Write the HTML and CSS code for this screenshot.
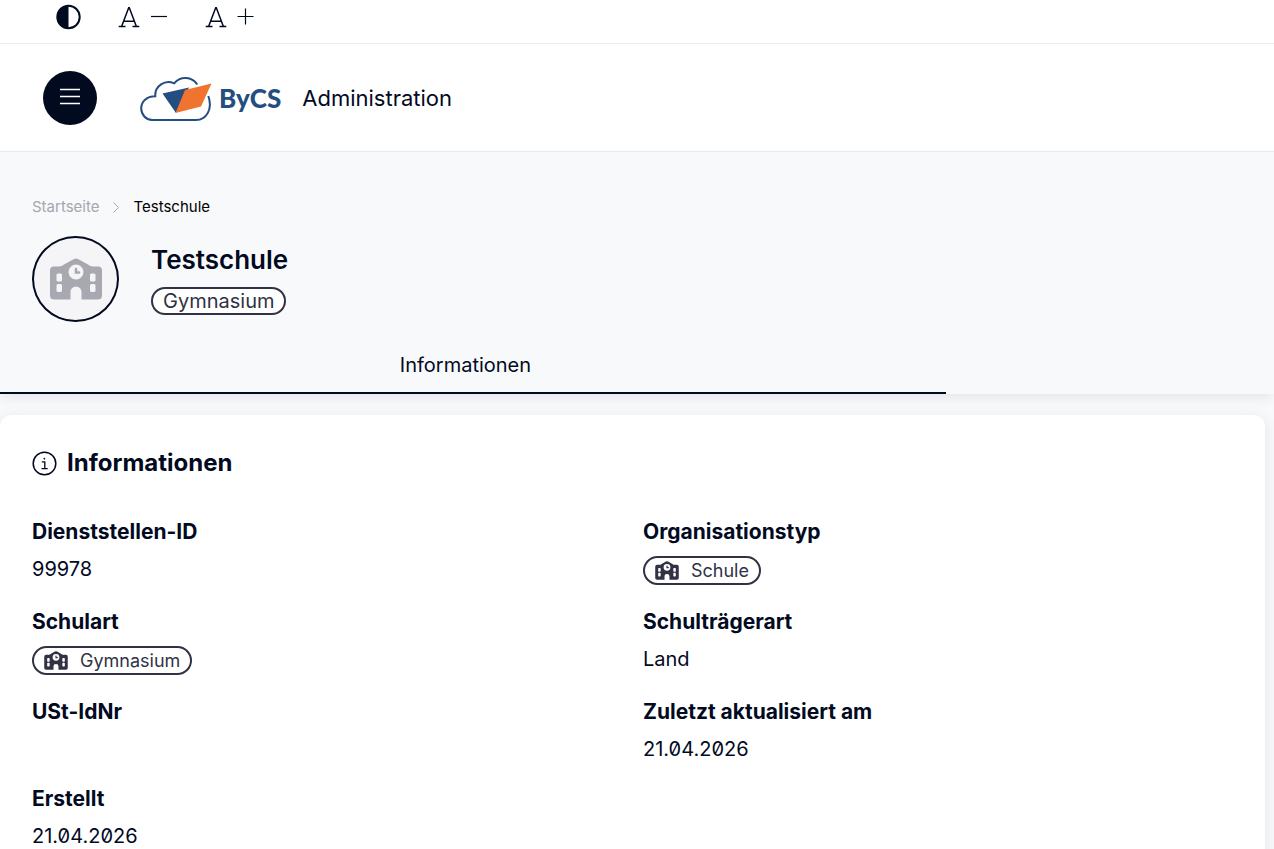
FILE: index.html
```
<!DOCTYPE html>
<html lang="de">
<head>
<meta charset="utf-8">
<meta name="viewport" content="width=device-width, initial-scale=1">
<title>ByCS Administration – Testschule</title>
<link rel="stylesheet" href="styles.css">
</head>
<body>
<svg class="defs" aria-hidden="true">
  <symbol id="school" viewBox="0 0 52 42">
    <path fill="currentColor" fill-rule="evenodd" d="M23.500 1.300a5 5 0 0 1 5 0L38 6.500a8 8 0 0 0 5 2h5a4 4 0 0 1 4 4V37.500a4 4 0 0 1-4 4H31.500V34a5.500 5.500 0 0 0-11 0v7.500H4a4 4 0 0 1-4-4V12.500a4 4 0 0 1 4-4h5a8 8 0 0 0 5-2zM26 6.500a7.500 7.500 0 1 0 0 15a7.500 7.500 0 1 0 0-15zM8 15.500a1.500 1.500 0 0 0-1.500 1.500v5a1.500 1.500 0 0 0 1.500 1.500h2.500a1.500 1.500 0 0 0 1.500-1.500v-5a1.500 1.500 0 0 0-1.500-1.500zM8 26a1.500 1.500 0 0 0-1.500 1.500v5A1.500 1.500 0 0 0 8 34h2.500a1.500 1.500 0 0 0 1.500-1.500v-5a1.500 1.500 0 0 0-1.500-1.500zM41.500 15.500A1.500 1.500 0 0 0 40 17v5a1.500 1.500 0 0 0 1.500 1.500H44a1.500 1.500 0 0 0 1.500-1.500v-5a1.500 1.500 0 0 0-1.500-1.500zM41.500 26a1.500 1.500 0 0 0-1.500 1.500v5a1.500 1.500 0 0 0 1.500 1.500H44a1.500 1.500 0 0 0 1.500-1.500v-5A1.500 1.500 0 0 0 44 26z"/>
    <path d="M26 11v3.500h3" fill="none" stroke="currentColor" stroke-width="2.500" stroke-linecap="round"/>
  </symbol>
</svg>

<div class="tools">
  <button class="tool" type="button" aria-label="Kontrast umschalten">
    <svg width="26" height="26" viewBox="0 0 26 26"><circle cx="13.500" cy="13" r="11.200" fill="none" stroke="currentColor" stroke-width="2"/><path d="M13.500 1.500a11.500 11.500 0 0 0 0 23z" fill="currentColor"/></svg>
  </button>
  <button class="tool" type="button" aria-label="Schrift verkleinern">
    <svg width="50" height="26" viewBox="0 0 50 26" fill="none" stroke="currentColor" stroke-width="1.500"><path d="M3.500 22.800 10.700 3.700h.600L18.500 22.800M6 17.200h10M.700 22.600h6.800M14.500 22.600h6.800"/><path d="M33 12.500h16" stroke-width="1.200"/></svg>
  </button>
  <button class="tool" type="button" aria-label="Schrift vergrößern">
    <svg width="50" height="26" viewBox="0 0 50 26" fill="none" stroke="currentColor" stroke-width="1.500"><path d="M3.500 22.800 10.700 3.700h.600L18.500 22.800M6 17.200h10M.700 22.600h6.800M14.500 22.600h6.800"/><path d="M32.500 12.500h16M40.500 4.500v16" stroke-width="1.200"/></svg>
  </button>
</div>

<header class="header">
  <button class="menu" type="button" aria-label="Menü">
    <svg width="20" height="17" viewBox="0 0 20 17" stroke="currentColor" stroke-width="1.500"><path d="M0 1.500h20M0 8.500h20M0 15.500h20"/></svg>
  </button>
  <a class="brand" href="#">
    <svg width="72" height="48" viewBox="0 0 72 48" aria-hidden="true">
      <path d="M57.300 10.500A14.300 14.300 0 0 0 34.200 9.300A13.300 13.300 0 0 0 15.300 22.300C6 22.300 1.200 28 1.200 34.300S6 46 12 46H56C66.500 46 73 35 68.300 22" fill="none" stroke="#244d80" stroke-width="2"/>
      <path d="M22.500 19.500 49 13.500 36 39z" fill="#244d80"/>
      <path d="M45 16 71.500 9.500 61 32.500 35.500 39z" fill="#f07430"/>
    </svg>
    <span class="brand-name">ByCS</span>
  </a>
  <span class="app-name">Administration</span>
</header>

<div class="hero">
  <nav class="crumbs" aria-label="Brotkrumen">
    <a href="#">Startseite</a>
    <svg width="6" height="11" viewBox="0 0 6 11" fill="none" stroke="currentColor"><path d="M.500.500l5 5-5 5"/></svg>
    <span class="current">Testschule</span>
  </nav>
  <div class="profile">
    <div class="avatar"><svg width="52" height="42"><use href="#school"/></svg></div>
    <div class="title">
      <h1>Testschule</h1>
      <span class="pill">Gymnasium</span>
    </div>
  </div>
  <div class="tabs" role="tablist">
    <button class="tab" type="button" role="tab" aria-selected="true">Informationen</button>
  </div>
</div>

<main class="card">
  <h2>
    <svg width="25" height="25" viewBox="0 0 25 25" fill="none" stroke="currentColor" stroke-width="1.500" aria-hidden="true"><circle cx="12.500" cy="12.500" r="11.300"/><path d="M9.800 10.800h3v6.700M9.500 17.600h6.200" stroke-width="1.300"/><circle cx="12.300" cy="7.700" r=".500" fill="currentColor" stroke-width="1"/></svg>
    Informationen
  </h2>
  <dl class="facts">
    <div><dt>Dienststellen-ID</dt><dd>99978</dd></div>
    <div><dt>Organisationstyp</dt><dd><span class="badge"><svg width="24" height="19"><use href="#school"/></svg>Schule</span></dd></div>
    <div><dt>Schulart</dt><dd><span class="badge"><svg width="24" height="19"><use href="#school"/></svg>Gymnasium</span></dd></div>
    <div><dt>Schulträgerart</dt><dd>Land</dd></div>
    <div><dt>USt-IdNr</dt><dd></dd></div>
    <div><dt>Zuletzt aktualisiert am</dt><dd>21.04.2026</dd></div>
    <div><dt>Erstellt</dt><dd>21.04.2026</dd></div>
  </dl>
</main>
</body>
</html>
```
FILE: styles.css
```
* { box-sizing: border-box; }
html { scrollbar-width: none; }
body {
  margin: 0;
  background: #f8f9fb;
  color: #020a1f;
  font: 20px/26px Inter, "Noto Sans", sans-serif;
  font-feature-settings: "zero";
}
button { font: inherit; color: inherit; border: 0; padding: 0; background: none; cursor: pointer; }
a { color: inherit; text-decoration: none; }
svg { display: block; flex: none; }
h1, h2, dl, dd { margin: 0; }
.defs { position: absolute; width: 0; height: 0; }

.tools {
  display: flex;
  gap: 37px;
  padding: 4px 55px 13px;
  background: #fff;
  border-bottom: 1px solid #ececef;
}
.header {
  display: flex;
  align-items: center;
  padding: 27px 43px 26px;
  background: #fff;
  border-bottom: 1px solid #e8eaed;
}
.menu {
  display: grid;
  place-items: center;
  width: 54px;
  height: 54px;
  padding-bottom: 3px;
  border-radius: 50%;
  background: #020a1f;
  color: #fff;
}
.brand { display: flex; align-items: center; gap: 7px; margin: 0 21px 0 43px; }
.brand-name { color: #244d80; font: 900 26px/32px Lato, sans-serif; }
.app-name { font-size: 22px; }

.crumbs {
  display: flex;
  align-items: center;
  gap: 14px;
  padding: 44px 32px 18px;
  color: #a5a6ae;
  font-size: 15px;
  line-height: 22px;
}
.crumbs .current { color: #000; }
.profile { display: flex; gap: 32px; padding: 0 32px; }
.avatar {
  display: grid;
  place-items: center;
  width: 87px;
  height: 86px;
  border: 2px solid #020a1f;
  border-radius: 50%;
  background: #f5f5f8;
  color: #a8a8b0;
}
.title { display: flex; flex-direction: column; align-items: flex-start; gap: 10px; padding-top: 7px; }
h1 { font-size: 26px; line-height: 34px; font-weight: 600; }
.pill, .badge {
  display: inline-flex;
  align-items: center;
  border: 2px solid #313244;
  border-radius: 15px;
  background: #fff;
  color: #313244;
}
.pill { height: 28px; padding: 0 10px; font-size: 20px; }
.badge { gap: 12px; height: 29px; padding: 0 10px; font-size: 18px; }

.tabs {
  margin-top: 15px;
  box-shadow: 0 6px 12px -2px rgba(2, 10, 31, .08);
}
.tab {
  display: block;
  width: 74.25%;
  padding: 15px 15px 14px 0;
  border-bottom: 2px solid #020a1f;
}

.card {
  margin: 21px 9px 0 0;
  padding: 32px 11px 24px 32px;
  border-radius: 12px;
  background: #fff;
  box-shadow: 0 4px 16px rgba(2, 10, 31, .09);
}
h2 { display: flex; align-items: center; gap: 10px; font-size: 24px; line-height: 32px; }
.facts {
  display: grid;
  grid-template-columns: 1fr 1fr;
  gap: 25px 0;
  margin-top: 41px;
}
dt { margin-bottom: 12px; font-size: 21px; font-weight: 700; line-height: 24px; }
dd { min-height: 26px; }
.badge { vertical-align: top; }
```
